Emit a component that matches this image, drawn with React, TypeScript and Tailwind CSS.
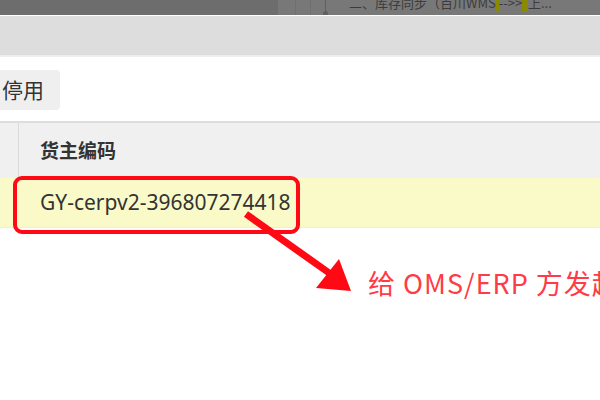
const App = () => {
	return (
		<div
			className="relative w-[600px] h-[400px] overflow-hidden bg-white"
			style={{ fontFamily: '"Noto Sans", "Noto Sans CJK SC", sans-serif' }}
		>
			{/* dimmed page behind the modal */}
			<div className="flex h-[15px] overflow-hidden">
				<div className="w-[278px] bg-[#6d6d6d]"></div>
				<div className="flex flex-1 bg-[#787878]">
					<div className="w-[18px] border-r border-[#6f6f6f]"></div>
					<div className="w-[15px] border-r border-[#6f6f6f]"></div>
					<div className="relative w-[15px] border-r border-[#5f5f5f]">
						<span className="absolute right-[-3px] top-[11px] w-[5px] h-[5px] rounded-full bg-[#5f5f5f]"></span>
					</div>
					<p className="ml-[23px] mt-[-7px] whitespace-nowrap text-[13px] text-[#3c3c3c] font-['Noto_Sans_CJK_SC',sans-serif]">
						二、库存同步（百川WMS<span className="bg-[#8a8a00]">&nbsp;</span>{"-->>"}<span className="bg-[#8a8a00]">&nbsp;&nbsp;</span>上...
					</p>
				</div>
			</div>
			<div className="h-px bg-white"></div>
			{/* modal title bar */}
			<div className="h-[41px] bg-[#dddddd] border-b-2 border-[#eeeeee]"></div>
			{/* toolbar */}
			<div className="h-[64px] pt-[13px]">
				<button className="h-[40px] w-[60px] pl-[2px] text-left rounded-r-[4px] bg-[#efefef] text-[21px] text-[#333] font-['Noto_Sans_CJK_SC',sans-serif]">
					停用
				</button>
			</div>
			{/* table */}
			<div className="border-t-2 border-[#dedede]">
				<div className="flex h-[55px] bg-[#f0f0f0]">
					<div className="w-[19px] border-r border-[#dcdcdc]"></div>
					<p className="pl-[21px] self-center font-bold text-[19px] text-[#333] font-['Noto_Sans_CJK_SC',sans-serif]">
						货主编码
					</p>
				</div>
				<div className="flex items-center h-[50px] bg-[#fafac9] border-b border-[#ececec]">
					<p className="pl-[40px] text-[21px] text-[#333]">GY-cerpv2-396807274418</p>
				</div>
			</div>
			{/* annotation */}
			<div className="absolute left-[13px] top-[176px] w-[287px] h-[58px] rounded-[9px] border-[4px] border-[#ff0a14]"></div>
			<svg className="absolute left-0 top-0" width="600" height="400">
				<line x1="246" y1="214" x2="332" y2="275" stroke="#ff0a14" strokeWidth="7" />
				<polygon points="351,291 339,259 316,288" fill="#ff0a14" />
			</svg>
			<p className="absolute left-[368px] top-[263px] whitespace-nowrap text-[27px] tracking-[1px] text-[#ff3b47] font-['Noto_Sans_CJK_SC',sans-serif]">
				给 OMS/ERP 方发起
			</p>
		</div>
	);
};

export default App;
